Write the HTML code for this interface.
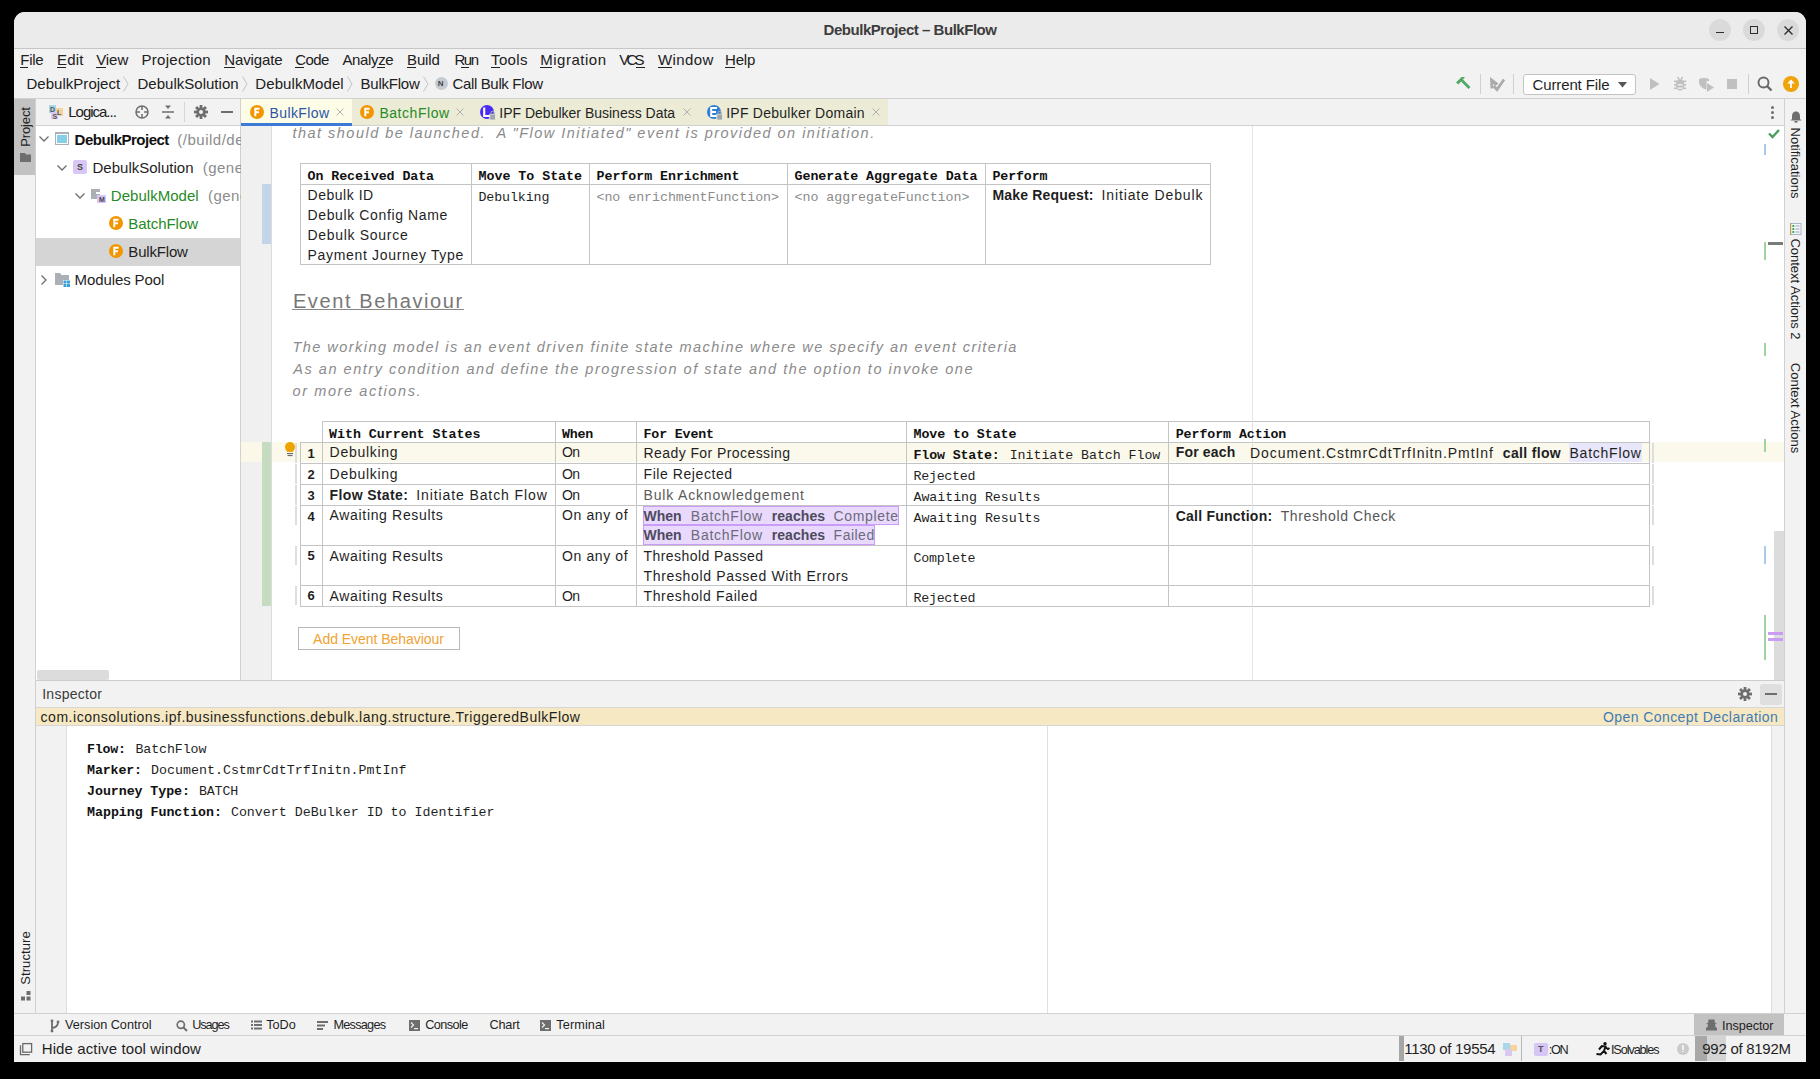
<!DOCTYPE html>
<html><head><meta charset="utf-8">
<style>
*{margin:0;padding:0;box-sizing:border-box}
html,body{width:1820px;height:1079px;overflow:hidden;background:#000}
body{position:relative;font-family:"Liberation Sans",sans-serif;color:#1f1f1f}
.a{position:absolute}
.t{position:absolute;white-space:pre}
svg{position:absolute;overflow:visible}
</style></head><body>
<div class="a" style="left:14px;top:12px;width:1792px;height:1050px;background:#f2f2f2;border-radius:11px 11px 0 0"></div>
<div class="a" style="left:14px;top:12px;width:1792px;height:36px;background:#ebebeb;border-radius:11px 11px 0 0"></div>
<div class="a" style="left:14px;top:48px;width:1792px;height:1px;background:#c6c6c6;"></div>
<div class="t" style="left:823.60px;top:20.20px;font-size:15px;line-height:19px;color:#3d3d3d;font-weight:bold;letter-spacing:-0.472px;">DebulkProject – BulkFlow</div>
<div class="a" style="left:1709px;top:19px;width:22px;height:22px;background:#dadada;border-radius:50%"></div>
<div class="a" style="left:1743px;top:19px;width:22px;height:22px;background:#dadada;border-radius:50%"></div>
<div class="a" style="left:1777px;top:19px;width:22px;height:22px;background:#dadada;border-radius:50%"></div>
<div class="a" style="left:1716px;top:32px;width:8px;height:1.4px;background:#2e2e2e;"></div>
<div class="a" style="left:1750px;top:26px;width:7.7px;height:7.6px;background:transparent;border:1.4px solid #2e2e2e"></div>
<svg style="left:1783.5px;top:25.5px" width="9" height="9"><path d="M0.5 0.5 L8.5 8.5 M8.5 0.5 L0.5 8.5" stroke="#2e2e2e" stroke-width="1.4"/></svg>
<div class="t" style="left:20.20px;top:50.40px;font-size:15px;line-height:19px;color:#202020;letter-spacing:-0.217px;">File</div>
<div class="t" style="left:57.10px;top:50.40px;font-size:15px;line-height:19px;color:#202020;letter-spacing:0.183px;">Edit</div>
<div class="t" style="left:96.20px;top:50.40px;font-size:15px;line-height:19px;color:#202020;letter-spacing:-0.067px;">View</div>
<div class="t" style="left:141.50px;top:50.40px;font-size:15px;line-height:19px;color:#202020;letter-spacing:0.278px;">Projection</div>
<div class="t" style="left:224.30px;top:50.40px;font-size:15px;line-height:19px;color:#202020;letter-spacing:-0.129px;">Navigate</div>
<div class="t" style="left:295.30px;top:50.40px;font-size:15px;line-height:19px;color:#202020;letter-spacing:-0.583px;">Code</div>
<div class="t" style="left:342.40px;top:50.40px;font-size:15px;line-height:19px;color:#202020;letter-spacing:-0.342px;">Analyze</div>
<div class="t" style="left:407.00px;top:50.40px;font-size:15px;line-height:19px;color:#202020;letter-spacing:-0.113px;">Build</div>
<div class="t" style="left:454.40px;top:50.40px;font-size:15px;line-height:19px;color:#202020;letter-spacing:-1.450px;">Run</div>
<div class="t" style="left:491.10px;top:50.40px;font-size:15px;line-height:19px;color:#202020;letter-spacing:0.325px;">Tools</div>
<div class="t" style="left:540.20px;top:50.40px;font-size:15px;line-height:19px;color:#202020;letter-spacing:0.512px;">Migration</div>
<div class="t" style="left:619.30px;top:50.40px;font-size:15px;line-height:19px;color:#202020;letter-spacing:-2.775px;">VCS</div>
<div class="t" style="left:658.00px;top:50.40px;font-size:15px;line-height:19px;color:#202020;letter-spacing:0.420px;">Window</div>
<div class="t" style="left:725.00px;top:50.40px;font-size:15px;line-height:19px;color:#202020;letter-spacing:-0.150px;">Help</div>
<div class="a" style="left:20.2px;top:67px;width:7.800000000000001px;height:1px;background:#202020;"></div>
<div class="a" style="left:57.1px;top:67px;width:8.899999999999999px;height:1px;background:#202020;"></div>
<div class="a" style="left:96.2px;top:67px;width:9.799999999999997px;height:1px;background:#202020;"></div>
<div class="a" style="left:224.3px;top:67px;width:10.699999999999989px;height:1px;background:#202020;"></div>
<div class="a" style="left:295.3px;top:67px;width:8.699999999999989px;height:1px;background:#202020;"></div>
<div class="a" style="left:377px;top:67px;width:8px;height:1px;background:#202020;"></div>
<div class="a" style="left:407px;top:67px;width:9px;height:1px;background:#202020;"></div>
<div class="a" style="left:461px;top:67px;width:8px;height:1px;background:#202020;"></div>
<div class="a" style="left:491.1px;top:67px;width:8.899999999999977px;height:1px;background:#202020;"></div>
<div class="a" style="left:540.2px;top:67px;width:11.799999999999955px;height:1px;background:#202020;"></div>
<div class="a" style="left:636px;top:67px;width:9px;height:1px;background:#202020;"></div>
<div class="a" style="left:658px;top:67px;width:14px;height:1px;background:#202020;"></div>
<div class="a" style="left:725px;top:67px;width:10px;height:1px;background:#202020;"></div>
<div class="t" style="left:26.50px;top:74.40px;font-size:15px;line-height:19px;color:#202020;letter-spacing:0.025px;">DebulkProject</div>
<div class="t" style="left:137.50px;top:74.40px;font-size:15px;line-height:19px;color:#202020;letter-spacing:0.015px;">DebulkSolution</div>
<div class="t" style="left:255.30px;top:74.40px;font-size:15px;line-height:19px;color:#202020;letter-spacing:0.085px;">DebulkModel</div>
<div class="t" style="left:360.60px;top:74.40px;font-size:15px;line-height:19px;color:#202020;letter-spacing:-0.243px;">BulkFlow</div>
<div class="t" style="left:452.40px;top:74.40px;font-size:15px;line-height:19px;color:#202020;letter-spacing:-0.338px;">Call Bulk Flow</div>
<svg style="left:123px;top:76px" width="6" height="16"><path d="M0.5 0.5 L5 8 L0.5 15.5" fill="none" stroke="#c4c4c4" stroke-width="1"/></svg>
<svg style="left:242px;top:76px" width="6" height="16"><path d="M0.5 0.5 L5 8 L0.5 15.5" fill="none" stroke="#c4c4c4" stroke-width="1"/></svg>
<svg style="left:347px;top:76px" width="6" height="16"><path d="M0.5 0.5 L5 8 L0.5 15.5" fill="none" stroke="#c4c4c4" stroke-width="1"/></svg>
<svg style="left:423px;top:76px" width="6" height="16"><path d="M0.5 0.5 L5 8 L0.5 15.5" fill="none" stroke="#c4c4c4" stroke-width="1"/></svg>
<div class="a" style="left:434.5px;top:77px;width:13px;height:13px;background:#c6cbd1;border-radius:50%"></div>
<div class="t" style="left:437.80px;top:79.43px;font-size:8px;line-height:10px;color:#444;font-weight:bold;">N</div>
<svg style="left:1450px;top:70px" width="70" height="28"><path d="M6 82.5 L11.5 77 L15 77 L13 79.5 L20.5 87 L18.5 89 L11 81.5 L8.5 84.5 Z" transform="translate(0,-70)" fill="#52a865"/><path d="M40 77 L48.5 83.5 L45.5 86 L43 84 L43 88.5 L40.5 88.5 Z" transform="translate(0,-70)" fill="#ababab"/><path d="M43.5 86 L47 89.5 L54 79.5" transform="translate(0,-70)" fill="none" stroke="#ababab" stroke-width="2.8"/></svg>
<div class="a" style="left:1480px;top:74px;width:1px;height:20px;background:#d0d0d0;"></div>
<div class="a" style="left:1513px;top:74px;width:1px;height:20px;background:#d0d0d0;"></div>
<div class="a" style="left:1523px;top:73.5px;width:112.5px;height:21px;background:#ffffff;border:1px solid #c4c4c4;border-radius:3px"></div>
<div class="t" style="left:1532.50px;top:74.60px;font-size:15px;line-height:19px;color:#1f1f1f;letter-spacing:-0.123px;">Current File</div>
<svg style="left:1617.5px;top:81.5px" width="9" height="6"><path d="M0 0 L9 0 L4.5 5.5 Z" fill="#555"/></svg>
<svg style="left:1640px;top:70px" width="105" height="28"><g fill="#c0c0c0" transform="translate(-1640,-70)"><path d="M1650 78 L1659.5 84 L1650 90 Z"/><ellipse cx="1680.1" cy="85" rx="4.3" ry="5.6"/><rect x="1674" y="80.5" width="12.2" height="1.6"/><rect x="1674" y="84" width="12.2" height="1.6"/><rect x="1674" y="87.5" width="12.2" height="1.6"/><path d="M1677.5 77 L1679.5 80 M1682.7 77 L1680.7 80" stroke="#c0c0c0" stroke-width="1.4"/><path d="M1699 79 C1702 77.5 1706 77.5 1709 79 L1709 81 L1706.5 81 L1706.5 89.5 C1703 89 1699 86 1699 82 Z"/><path d="M1707 83 L1714 87.5 L1707 92 Z"/><rect x="1727" y="79" width="10" height="10"/></g><g fill="#f2f2f2"><rect x="37.5" y="14.2" width="5.2" height="1.3"/><rect x="37.5" y="17.5" width="5.2" height="1.3"/></g></svg>
<div class="a" style="left:1748px;top:74px;width:1px;height:20px;background:#d0d0d0;"></div>
<svg style="left:1757px;top:76px" width="16" height="16"><circle cx="6.5" cy="6.5" r="5" fill="none" stroke="#686868" stroke-width="1.9"/><path d="M10 10 L14.5 14.5" stroke="#686868" stroke-width="2.4"/></svg>
<div class="a" style="left:1782.5px;top:76px;width:16px;height:16px;background:#f0a30a;border-radius:50%"></div>
<svg style="left:1785.5px;top:79px" width="10" height="10"><path d="M1.2 4.5 L5 0.5 L8.8 4.5 Z" fill="#fff"/><rect x="4.1" y="4" width="1.8" height="5" fill="#fff"/></svg>
<div class="a" style="left:14px;top:98px;width:1792px;height:1px;background:#d1d1d1;"></div>
<div class="a" style="left:14px;top:99px;width:21px;height:76px;background:#c2c2c2;"></div>
<div class="a" style="left:35px;top:98px;width:1px;height:915px;background:#d1d1d1;"></div>
<div class="t" style="left:24.5px;top:126.5px;font-size:13px;line-height:13px;color:#1f1f1f;transform:translate(-50%,-50%) rotate(-90deg);letter-spacing:-0.15px">Project</div>
<svg style="left:20px;top:153px" width="11" height="9"><path d="M0 0 L5 0 L6 1.5 L11 1.5 L11 9 L0 9 Z" fill="#6e6e6e"/></svg>
<div class="t" style="left:25px;top:958px;font-size:13px;line-height:13px;color:#1f1f1f;transform:translate(-50%,-50%) rotate(-90deg);letter-spacing:0.1px">Structure</div>
<svg style="left:21px;top:991px" width="10" height="10"><rect x="5.5" y="0" width="4" height="4" fill="#6e6e6e"/><rect x="0" y="5.5" width="4" height="4" fill="#6e6e6e"/><rect x="5.5" y="5.5" width="4" height="4" fill="#6e6e6e"/></svg>
<div class="a" style="left:36px;top:125px;width:204px;height:555px;background:#ffffff;"></div>
<div class="a" style="left:36px;top:125px;width:204px;height:1px;background:#d1d1d1;"></div>
<div class="a" style="left:240px;top:98px;width:1px;height:582px;background:#d1d1d1;"></div>
<div class="a" style="left:49px;top:105px;width:7px;height:8px;background:#a9d7ea;"></div>
<div class="a" style="left:56px;top:108px;width:7px;height:8px;background:#f6d39c;"></div>
<div class="a" style="left:51px;top:112px;width:7px;height:7px;background:#d9c8f2;"></div>
<div class="t" style="left:50.00px;top:105.07px;font-size:7px;line-height:9px;color:#555;font-weight:bold;">D</div>
<div class="t" style="left:57.00px;top:108.07px;font-size:7px;line-height:9px;color:#555;font-weight:bold;">L</div>
<div class="t" style="left:52.50px;top:111.57px;font-size:7px;line-height:9px;color:#555;font-weight:bold;">S</div>
<div class="t" style="left:68.30px;top:102.10px;font-size:15px;line-height:19px;color:#202020;letter-spacing:-1.025px;">Logica...</div>
<svg style="left:135px;top:105px" width="14" height="14"><circle cx="7" cy="7" r="6" fill="none" stroke="#6e6e6e" stroke-width="1.5"/><path d="M7 1 L7 5 M7 9 L7 13 M1 7 L5 7 M9 7 L13 7" stroke="#6e6e6e" stroke-width="1.5"/></svg>
<svg style="left:162px;top:105px" width="12" height="14"><path d="M0 7 L12 7" stroke="#6e6e6e" stroke-width="1.5"/><path d="M3 0.5 L9 0.5 L6 4 Z M3 13.5 L9 13.5 L6 10 Z" fill="#6e6e6e"/></svg>
<div class="a" style="left:184px;top:102px;width:1px;height:20px;background:#d6d6d6;"></div>
<svg style="left:194px;top:105px" width="14" height="14"><g fill="#6e6e6e"><circle cx="7" cy="7" r="4.6"/><rect x="5.6" y="0" width="2.8" height="14"/><rect x="0" y="5.6" width="14" height="2.8"/><rect x="5.6" y="0" width="2.8" height="14" transform="rotate(45 7 7)"/><rect x="5.6" y="0" width="2.8" height="14" transform="rotate(-45 7 7)"/></g><circle cx="7" cy="7" r="2" fill="#f2f2f2"/></svg>
<div class="a" style="left:221px;top:111px;width:12px;height:2px;background:#6e6e6e;"></div>
<svg style="left:38.9px;top:136.3px" width="10" height="6"><path d="M0.5 0.5 L5 5 L9.5 0.5" fill="none" stroke="#6e6e6e" stroke-width="1.3"/></svg>
<div class="a" style="left:55px;top:132px;width:14px;height:12.7px;background:#ffffff;border:1.5px solid #aab0b6;border-top-width:2.5px"></div>
<div class="a" style="left:57px;top:135px;width:10px;height:8px;background:#87cee9;"></div>
<div class="t" style="left:74.60px;top:129.80px;font-size:15px;line-height:19px;color:#111;font-weight:bold;letter-spacing:-0.512px;">DebulkProject</div>
<div class="t" style="left:177.30px;top:129.80px;font-size:15px;line-height:19px;color:#8c8c8c;letter-spacing:0.500px;">(/build/de</div>
<svg style="left:56.8px;top:165px" width="10" height="6"><path d="M0.5 0.5 L5 5 L9.5 0.5" fill="none" stroke="#6e6e6e" stroke-width="1.3"/></svg>
<div class="a" style="left:73px;top:160px;width:14px;height:13.5px;background:#d8c6f6;border-radius:2px"></div>
<div class="t" style="left:77.00px;top:161.88px;font-size:9px;line-height:11px;color:#444;font-weight:bold;">S</div>
<div class="t" style="left:92.50px;top:158.00px;font-size:15px;line-height:19px;color:#1f1f1f;letter-spacing:0.008px;">DebulkSolution</div>
<div class="t" style="left:202.70px;top:158.00px;font-size:15px;line-height:19px;color:#8c8c8c;letter-spacing:0.500px;">(gene</div>
<svg style="left:75.2px;top:193px" width="10" height="6"><path d="M0.5 0.5 L5 5 L9.5 0.5" fill="none" stroke="#6e6e6e" stroke-width="1.3"/></svg>
<div class="a" style="left:91px;top:189.2px;width:9px;height:10px;background:#aab0b6;"></div>
<div class="a" style="left:96px;top:191.5px;width:4px;height:2px;background:#ffffff;"></div>
<div class="a" style="left:97px;top:195px;width:9px;height:8px;background:#d8c6f6;"></div>
<div class="t" style="left:99.00px;top:195.07px;font-size:7px;line-height:9px;color:#444;font-weight:bold;">M</div>
<div class="t" style="left:110.80px;top:186.10px;font-size:15px;line-height:19px;color:#268a26;letter-spacing:0.035px;">DebulkModel</div>
<div class="t" style="left:207.90px;top:186.10px;font-size:15px;line-height:19px;color:#8c8c8c;letter-spacing:0.500px;">(gene</div>
<svg style="left:109px;top:216.1px" width="14" height="14"><circle cx="7" cy="7" r="7" fill="#f29600"/><path d="M5.3 11.2 L5.3 3.8 L9.6 3.8 M5.3 7.3 L9 7.3" fill="none" stroke="#fff" stroke-width="2"/></svg>
<div class="t" style="left:128.30px;top:213.80px;font-size:15px;line-height:19px;color:#268a26;letter-spacing:-0.038px;">BatchFlow</div>
<div class="a" style="left:36px;top:238px;width:204px;height:28px;background:#d5d5d5;"></div>
<svg style="left:109px;top:244px" width="14" height="14"><circle cx="7" cy="7" r="7" fill="#f29600"/><path d="M5.3 11.2 L5.3 3.8 L9.6 3.8 M5.3 7.3 L9 7.3" fill="none" stroke="#fff" stroke-width="2"/></svg>
<div class="t" style="left:128.30px;top:241.70px;font-size:15px;line-height:19px;color:#1f1f1f;letter-spacing:-0.171px;">BulkFlow</div>
<svg style="left:40.5px;top:275px" width="6" height="10"><path d="M0.5 0.5 L5 5 L0.5 9.5" fill="none" stroke="#6e6e6e" stroke-width="1.3"/></svg>
<svg style="left:55px;top:273px" width="16" height="15"><path d="M0 0 L5 0 L6.5 2 L14 2 L14 7 L8 7 L8 12 L0 12 Z" fill="#aab0b6"/><g fill="#3aa0d8"><rect x="8.5" y="7.5" width="3" height="3"/><rect x="12" y="7.5" width="3" height="3"/><rect x="8.5" y="11" width="3" height="3"/><rect x="12" y="11" width="3" height="3"/></g></svg>
<div class="t" style="left:74.60px;top:270.10px;font-size:15px;line-height:19px;color:#1f1f1f;letter-spacing:-0.109px;">Modules Pool</div>
<div class="a" style="left:37px;top:670px;width:72px;height:10px;background:#dcdcdc;border-radius:2px"></div>
<div class="a" style="left:241px;top:99px;width:1543px;height:26px;background:#f2f2f2;"></div>
<div class="a" style="left:241px;top:99px;width:647px;height:26px;background:#ececd6;"></div>
<div class="a" style="left:241px;top:99px;width:111px;height:26px;background:#fdfde7;"></div>
<div class="a" style="left:241px;top:125px;width:1543px;height:1px;background:#d1d1d1;"></div>
<div class="a" style="left:241px;top:123px;width:111px;height:3px;background:#3d7ad6;"></div>
<div class="a" style="left:272px;top:126px;width:1512px;height:554px;background:#ffffff;"></div>
<div class="a" style="left:241px;top:126px;width:31px;height:554px;background:#f0f0f0;"></div>
<div class="a" style="left:271px;top:126px;width:1px;height:554px;background:#dcdcdc;"></div>
<svg style="left:249.7px;top:105px" width="14" height="14"><circle cx="7" cy="7" r="7" fill="#f29600"/><path d="M5.3 11.2 L5.3 3.8 L9.6 3.8 M5.3 7.3 L9 7.3" fill="none" stroke="#fff" stroke-width="2"/></svg>
<div class="t" style="left:269.50px;top:103.65px;font-size:14px;line-height:18px;color:#2d55a8;letter-spacing:0.393px;">BulkFlow</div>
<svg style="left:359.9px;top:105px" width="14" height="14"><circle cx="7" cy="7" r="7" fill="#f29600"/><path d="M5.3 11.2 L5.3 3.8 L9.6 3.8 M5.3 7.3 L9 7.3" fill="none" stroke="#fff" stroke-width="2"/></svg>
<div class="t" style="left:379.40px;top:103.65px;font-size:14px;line-height:18px;color:#268a26;letter-spacing:0.550px;">BatchFlow</div>
<svg style="left:336px;top:108px" width="8" height="8"><path d="M0.5 0.5 L7.5 7.5 M7.5 0.5 L0.5 7.5" stroke="#b0b0b0" stroke-width="1"/></svg>
<svg style="left:455.5px;top:108px" width="8" height="8"><path d="M0.5 0.5 L7.5 7.5 M7.5 0.5 L0.5 7.5" stroke="#b0b0b0" stroke-width="1"/></svg>
<svg style="left:683px;top:108px" width="8" height="8"><path d="M0.5 0.5 L7.5 7.5 M7.5 0.5 L0.5 7.5" stroke="#b0b0b0" stroke-width="1"/></svg>
<svg style="left:872px;top:108px" width="8" height="8"><path d="M0.5 0.5 L7.5 7.5 M7.5 0.5 L0.5 7.5" stroke="#b0b0b0" stroke-width="1"/></svg>
<svg style="left:479px;top:104px" width="18" height="18"><circle cx="8" cy="8" r="7" fill="#4a2cf5"/><path d="M5.2 3.5 L5.2 12 L11 12" fill="none" stroke="#fff" stroke-width="2.1"/><rect x="10.8" y="10.2" width="5.6" height="5.8" fill="#9ea7b0" stroke="#ececd6" stroke-width="0.8"/><path d="M12 10.5 L12 8.8 A1.6 1.6 0 0 1 15.2 8.8 L15.2 10.5" fill="none" stroke="#9ea7b0" stroke-width="1.1"/></svg>
<div class="t" style="left:499.30px;top:103.65px;font-size:14px;line-height:18px;color:#1f1f1f;">IPF Debulker Business Data</div>
<svg style="left:705.5px;top:104px" width="18" height="18"><circle cx="8" cy="8" r="7" fill="#2f7fd6"/><path d="M11 4 L5.2 4 L5.2 12 L11 12 M5.2 8 L10 8" fill="none" stroke="#fff" stroke-width="2"/><rect x="10.8" y="10.2" width="5.6" height="5.8" fill="#9ea7b0" stroke="#ececd6" stroke-width="0.8"/><path d="M12 10.5 L12 8.8 A1.6 1.6 0 0 1 15.2 8.8 L15.2 10.5" fill="none" stroke="#9ea7b0" stroke-width="1.1"/></svg>
<div class="t" style="left:726.20px;top:103.65px;font-size:14px;line-height:18px;color:#1f1f1f;letter-spacing:0.253px;">IPF Debulker Domain</div>
<div class="a" style="left:1770.5px;top:106px;width:3px;height:3px;background:#6e6e6e;border-radius:50%"></div>
<div class="a" style="left:1770.5px;top:111px;width:3px;height:3px;background:#6e6e6e;border-radius:50%"></div>
<div class="a" style="left:1770.5px;top:116px;width:3px;height:3px;background:#6e6e6e;border-radius:50%"></div>
<div class="a" style="left:272px;top:126px;width:1000px;height:20px;overflow:hidden">
<div class="t" style="left:20.50px;top:-2.33px;font-size:14.5px;line-height:18px;color:#8b8b8b;font-style:italic;letter-spacing:1.476px;">that should be launched.  A &quot;Flow Initiated&quot; event is provided on initiation.</div>
</div>
<div class="a" style="left:262px;top:184px;width:9px;height:60px;background:#c3d5e8;"></div>
<div class="a" style="left:1252px;top:126px;width:1px;height:554px;background:#e6e6e6;"></div>
<div class="a" style="left:300px;top:163px;width:911px;height:1px;background:#c4c4c4;"></div>
<div class="a" style="left:300px;top:264px;width:911px;height:1px;background:#c4c4c4;"></div>
<div class="a" style="left:300px;top:163px;width:1px;height:102px;background:#c4c4c4;"></div>
<div class="a" style="left:1210px;top:163px;width:1px;height:102px;background:#c4c4c4;"></div>
<div class="a" style="left:300px;top:184px;width:911px;height:1px;background:#c4c4c4;"></div>
<div class="a" style="left:471px;top:163px;width:1px;height:102px;background:#c4c4c4;"></div>
<div class="a" style="left:589px;top:163px;width:1px;height:102px;background:#c4c4c4;"></div>
<div class="a" style="left:787px;top:163px;width:1px;height:102px;background:#c4c4c4;"></div>
<div class="a" style="left:985px;top:163px;width:1px;height:102px;background:#c4c4c4;"></div>
<div class="t" style="left:307.50px;top:167.76px;font-size:13.3px;line-height:17px;color:#111;font-family:'Liberation Mono',monospace;font-weight:bold;letter-spacing:-0.073px;">On Received Data</div>
<div class="t" style="left:478.50px;top:167.76px;font-size:13.3px;line-height:17px;color:#111;font-family:'Liberation Mono',monospace;font-weight:bold;letter-spacing:-0.021px;">Move To State</div>
<div class="t" style="left:596.50px;top:167.76px;font-size:13.3px;line-height:17px;color:#111;font-family:'Liberation Mono',monospace;font-weight:bold;letter-spacing:-0.038px;">Perform Enrichment</div>
<div class="t" style="left:794.50px;top:167.76px;font-size:13.3px;line-height:17px;color:#111;font-family:'Liberation Mono',monospace;font-weight:bold;letter-spacing:-0.025px;">Generate Aggregate Data</div>
<div class="t" style="left:992.50px;top:167.76px;font-size:13.3px;line-height:17px;color:#111;font-family:'Liberation Mono',monospace;font-weight:bold;letter-spacing:-0.142px;">Perform</div>
<div class="t" style="left:307.50px;top:186.15px;font-size:14px;line-height:18px;color:#1f1f1f;letter-spacing:0.531px;">Debulk ID</div>
<div class="t" style="left:307.50px;top:206.05px;font-size:14px;line-height:18px;color:#1f1f1f;letter-spacing:0.626px;">Debulk Config Name</div>
<div class="t" style="left:307.50px;top:225.75px;font-size:14px;line-height:18px;color:#1f1f1f;letter-spacing:0.696px;">Debulk Source</div>
<div class="t" style="left:307.50px;top:245.65px;font-size:14px;line-height:18px;color:#1f1f1f;letter-spacing:0.676px;">Payment Journey Type</div>
<div class="t" style="left:478.50px;top:188.96px;font-size:13.3px;line-height:17px;color:#1f1f1f;font-family:'Liberation Mono',monospace;letter-spacing:-0.106px;">Debulking</div>
<div class="t" style="left:596.50px;top:188.96px;font-size:13.3px;line-height:17px;color:#8c8c8c;font-family:'Liberation Mono',monospace;letter-spacing:-0.048px;">&lt;no enrichmentFunction&gt;</div>
<div class="t" style="left:794.50px;top:188.96px;font-size:13.3px;line-height:17px;color:#8c8c8c;font-family:'Liberation Mono',monospace;letter-spacing:-0.029px;">&lt;no aggregateFunction&gt;</div>
<div class="t" style="left:992.50px;top:186.15px;font-size:14px;line-height:18px;color:#1f1f1f;font-weight:bold;letter-spacing:0.183px;">Make Request:</div>
<div class="t" style="left:1101.50px;top:186.15px;font-size:14px;line-height:18px;color:#1f1f1f;letter-spacing:0.875px;">Initiate Debulk</div>
<div class="t" style="left:292.90px;top:288.67px;font-size:20px;line-height:25px;color:#777777;letter-spacing:1.611px;">Event Behaviour</div>
<div class="a" style="left:292px;top:309px;width:172px;height:1.2px;background:#888888;"></div>
<div class="t" style="left:292.50px;top:337.87px;font-size:14.5px;line-height:18px;color:#8b8b8b;font-style:italic;letter-spacing:1.454px;">The working model is an event driven finite state machine where we specify an event criteria</div>
<div class="t" style="left:293.25px;top:359.87px;font-size:14.5px;line-height:18px;color:#8b8b8b;font-style:italic;letter-spacing:1.533px;">As an entry condition and define the progression of state and the option to invoke one</div>
<div class="t" style="left:292.50px;top:381.77px;font-size:14.5px;line-height:18px;color:#8b8b8b;font-style:italic;letter-spacing:1.610px;">or more actions.</div>
<div class="a" style="left:241px;top:442px;width:21px;height:20px;background:#fbf8e9;"></div>
<div class="a" style="left:272px;top:442px;width:1512px;height:20px;background:#fbf9ec;"></div>
<div class="a" style="left:262px;top:442px;width:9px;height:164px;background:#c5dcc0;"></div>
<div class="a" style="left:322px;top:421px;width:1328px;height:1px;background:#c4c4c4;"></div>
<div class="a" style="left:322px;top:421px;width:1px;height:22px;background:#c4c4c4;"></div>
<div class="a" style="left:1649px;top:421px;width:1px;height:22px;background:#c4c4c4;"></div>
<div class="a" style="left:555px;top:421px;width:1px;height:185px;background:#c4c4c4;"></div>
<div class="a" style="left:636px;top:421px;width:1px;height:185px;background:#c4c4c4;"></div>
<div class="a" style="left:906px;top:421px;width:1px;height:185px;background:#c4c4c4;"></div>
<div class="a" style="left:1168px;top:421px;width:1px;height:185px;background:#c4c4c4;"></div>
<div class="a" style="left:300px;top:442px;width:1350px;height:1px;background:#c4c4c4;"></div>
<div class="a" style="left:300px;top:463px;width:1350px;height:1px;background:#c4c4c4;"></div>
<div class="a" style="left:300px;top:484px;width:1350px;height:1px;background:#c4c4c4;"></div>
<div class="a" style="left:300px;top:505px;width:1350px;height:1px;background:#c4c4c4;"></div>
<div class="a" style="left:300px;top:545px;width:1350px;height:1px;background:#c4c4c4;"></div>
<div class="a" style="left:300px;top:585px;width:1350px;height:1px;background:#c4c4c4;"></div>
<div class="a" style="left:300px;top:606px;width:1350px;height:1px;background:#c4c4c4;"></div>
<div class="a" style="left:300px;top:442px;width:1px;height:165px;background:#c4c4c4;"></div>
<div class="a" style="left:322px;top:442px;width:1px;height:165px;background:#c4c4c4;"></div>
<div class="a" style="left:1649px;top:442px;width:1px;height:165px;background:#c4c4c4;"></div>
<div class="a" style="left:295px;top:443px;width:2px;height:20px;background:#dedede;"></div>
<div class="a" style="left:1652px;top:443px;width:2px;height:20px;background:#dedede;"></div>
<div class="a" style="left:295px;top:464px;width:2px;height:20px;background:#dedede;"></div>
<div class="a" style="left:1652px;top:464px;width:2px;height:20px;background:#dedede;"></div>
<div class="a" style="left:295px;top:485px;width:2px;height:20px;background:#dedede;"></div>
<div class="a" style="left:1652px;top:485px;width:2px;height:20px;background:#dedede;"></div>
<div class="a" style="left:295px;top:506px;width:2px;height:19px;background:#dedede;"></div>
<div class="a" style="left:1652px;top:506px;width:2px;height:19px;background:#dedede;"></div>
<div class="a" style="left:295px;top:546px;width:2px;height:19px;background:#dedede;"></div>
<div class="a" style="left:1652px;top:546px;width:2px;height:19px;background:#dedede;"></div>
<div class="a" style="left:295px;top:586px;width:2px;height:19px;background:#dedede;"></div>
<div class="a" style="left:1652px;top:586px;width:2px;height:19px;background:#dedede;"></div>
<div class="a" style="left:1252px;top:421px;width:1px;height:186px;background:#e0e0e0;"></div>
<div class="t" style="left:329.00px;top:425.66px;font-size:13.3px;line-height:17px;color:#111;font-family:'Liberation Mono',monospace;font-weight:bold;letter-spacing:-0.014px;">With Current States</div>
<div class="t" style="left:562.00px;top:425.66px;font-size:13.3px;line-height:17px;color:#111;font-family:'Liberation Mono',monospace;font-weight:bold;letter-spacing:-0.250px;">When</div>
<div class="t" style="left:643.50px;top:425.66px;font-size:13.3px;line-height:17px;color:#111;font-family:'Liberation Mono',monospace;font-weight:bold;letter-spacing:-0.156px;">For Event</div>
<div class="t" style="left:913.50px;top:425.66px;font-size:13.3px;line-height:17px;color:#111;font-family:'Liberation Mono',monospace;font-weight:bold;letter-spacing:-0.062px;">Move to State</div>
<div class="t" style="left:1175.70px;top:425.66px;font-size:13.3px;line-height:17px;color:#111;font-family:'Liberation Mono',monospace;font-weight:bold;letter-spacing:-0.081px;">Perform Action</div>
<div class="t" style="left:307.60px;top:446.19px;font-size:13px;line-height:16px;color:#1f1f1f;font-weight:bold;">1</div>
<div class="t" style="left:307.60px;top:467.09px;font-size:13px;line-height:16px;color:#1f1f1f;font-weight:bold;">2</div>
<div class="t" style="left:307.60px;top:488.09px;font-size:13px;line-height:16px;color:#1f1f1f;font-weight:bold;">3</div>
<div class="t" style="left:307.60px;top:508.79px;font-size:13px;line-height:16px;color:#1f1f1f;font-weight:bold;">4</div>
<div class="t" style="left:307.60px;top:548.09px;font-size:13px;line-height:16px;color:#1f1f1f;font-weight:bold;">5</div>
<div class="t" style="left:307.60px;top:588.09px;font-size:13px;line-height:16px;color:#1f1f1f;font-weight:bold;">6</div>
<div class="t" style="left:329.60px;top:443.35px;font-size:14px;line-height:18px;color:#1f1f1f;letter-spacing:0.719px;">Debulking</div>
<div class="t" style="left:329.60px;top:464.75px;font-size:14px;line-height:18px;color:#1f1f1f;letter-spacing:0.719px;">Debulking</div>
<div class="t" style="left:329.60px;top:485.85px;font-size:14px;line-height:18px;color:#1f1f1f;font-weight:bold;letter-spacing:0.355px;">Flow State:</div>
<div class="t" style="left:416.30px;top:485.85px;font-size:14px;line-height:18px;color:#1f1f1f;letter-spacing:0.892px;">Initiate Batch Flow</div>
<div class="t" style="left:329.60px;top:506.45px;font-size:14px;line-height:18px;color:#1f1f1f;letter-spacing:0.663px;">Awaiting Results</div>
<div class="t" style="left:329.60px;top:546.75px;font-size:14px;line-height:18px;color:#1f1f1f;letter-spacing:0.663px;">Awaiting Results</div>
<div class="t" style="left:329.60px;top:586.75px;font-size:14px;line-height:18px;color:#1f1f1f;letter-spacing:0.663px;">Awaiting Results</div>
<div class="t" style="left:562.00px;top:443.35px;font-size:14px;line-height:18px;color:#1f1f1f;letter-spacing:-0.700px;">On</div>
<div class="t" style="left:562.00px;top:464.75px;font-size:14px;line-height:18px;color:#1f1f1f;letter-spacing:-0.700px;">On</div>
<div class="t" style="left:562.00px;top:485.85px;font-size:14px;line-height:18px;color:#1f1f1f;letter-spacing:-0.700px;">On</div>
<div class="t" style="left:562.00px;top:506.45px;font-size:14px;line-height:18px;color:#1f1f1f;letter-spacing:0.619px;">On any of</div>
<div class="t" style="left:562.00px;top:546.75px;font-size:14px;line-height:18px;color:#1f1f1f;letter-spacing:0.619px;">On any of</div>
<div class="t" style="left:562.00px;top:586.75px;font-size:14px;line-height:18px;color:#1f1f1f;letter-spacing:-0.700px;">On</div>
<div class="t" style="left:643.50px;top:443.75px;font-size:14px;line-height:18px;color:#1f1f1f;letter-spacing:0.421px;">Ready For Processing</div>
<div class="t" style="left:643.50px;top:464.95px;font-size:14px;line-height:18px;color:#1f1f1f;letter-spacing:0.575px;">File Rejected</div>
<div class="t" style="left:643.50px;top:485.95px;font-size:14px;line-height:18px;color:#5a5a5a;letter-spacing:0.829px;">Bulk Acknowledgement</div>
<div class="a" style="left:643px;top:506px;width:256px;height:19px;background:#e9d9fc;border:1px solid #c99df6"></div>
<div class="a" style="left:643px;top:525px;width:232px;height:20px;background:#e9d9fc;border:1px solid #c99df6"></div>
<div class="t" style="left:643.50px;top:506.65px;font-size:14px;line-height:18px;color:#4d4a5e;font-weight:bold;letter-spacing:-0.033px;">When</div>
<div class="t" style="left:690.80px;top:506.65px;font-size:14px;line-height:18px;color:#6b6b7a;letter-spacing:0.750px;">BatchFlow</div>
<div class="t" style="left:771.70px;top:506.65px;font-size:14px;line-height:18px;color:#4d4a5e;font-weight:bold;letter-spacing:0.075px;">reaches</div>
<div class="t" style="left:643.50px;top:526.45px;font-size:14px;line-height:18px;color:#4d4a5e;font-weight:bold;letter-spacing:-0.033px;">When</div>
<div class="t" style="left:690.80px;top:526.45px;font-size:14px;line-height:18px;color:#6b6b7a;letter-spacing:0.750px;">BatchFlow</div>
<div class="t" style="left:771.70px;top:526.45px;font-size:14px;line-height:18px;color:#4d4a5e;font-weight:bold;letter-spacing:0.075px;">reaches</div>
<div class="t" style="left:833.60px;top:506.65px;font-size:14px;line-height:18px;color:#6b6b7a;letter-spacing:0.643px;">Complete</div>
<div class="t" style="left:833.60px;top:526.45px;font-size:14px;line-height:18px;color:#6b6b7a;letter-spacing:0.490px;">Failed</div>
<div class="t" style="left:643.50px;top:547.15px;font-size:14px;line-height:18px;color:#1f1f1f;letter-spacing:0.443px;">Threshold Passed</div>
<div class="t" style="left:643.50px;top:566.95px;font-size:14px;line-height:18px;color:#1f1f1f;letter-spacing:0.657px;">Threshold Passed With Errors</div>
<div class="t" style="left:643.50px;top:586.65px;font-size:14px;line-height:18px;color:#1f1f1f;letter-spacing:0.637px;">Threshold Failed</div>
<div class="t" style="left:913.50px;top:446.96px;font-size:13.3px;line-height:17px;color:#111;font-family:'Liberation Mono',monospace;font-weight:bold;letter-spacing:-0.150px;">Flow State:</div>
<div class="t" style="left:1009.70px;top:446.96px;font-size:13.3px;line-height:17px;color:#1f1f1f;font-family:'Liberation Mono',monospace;letter-spacing:-0.053px;">Initiate Batch Flow</div>
<div class="t" style="left:913.50px;top:467.96px;font-size:13.3px;line-height:17px;color:#1f1f1f;font-family:'Liberation Mono',monospace;letter-spacing:-0.264px;">Rejected</div>
<div class="t" style="left:913.50px;top:489.06px;font-size:13.3px;line-height:17px;color:#1f1f1f;font-family:'Liberation Mono',monospace;letter-spacing:-0.047px;">Awaiting Results</div>
<div class="t" style="left:913.50px;top:509.96px;font-size:13.3px;line-height:17px;color:#1f1f1f;font-family:'Liberation Mono',monospace;letter-spacing:-0.047px;">Awaiting Results</div>
<div class="t" style="left:913.50px;top:549.86px;font-size:13.3px;line-height:17px;color:#1f1f1f;font-family:'Liberation Mono',monospace;letter-spacing:-0.264px;">Complete</div>
<div class="t" style="left:913.50px;top:589.76px;font-size:13.3px;line-height:17px;color:#1f1f1f;font-family:'Liberation Mono',monospace;letter-spacing:-0.264px;">Rejected</div>
<div class="t" style="left:1175.70px;top:443.45px;font-size:14px;line-height:18px;color:#1f1f1f;font-weight:bold;letter-spacing:0.179px;">For each</div>
<div class="t" style="left:1250.00px;top:443.85px;font-size:14px;line-height:18px;color:#1f1f1f;letter-spacing:0.927px;">Document.CstmrCdtTrfInitn.PmtInf</div>
<div class="t" style="left:1502.80px;top:443.85px;font-size:14px;line-height:18px;color:#1f1f1f;font-weight:bold;letter-spacing:0.338px;">call flow</div>
<div class="a" style="left:1569px;top:443px;width:73px;height:19px;background:#e8e6fa;"></div>
<div class="t" style="left:1569.50px;top:443.85px;font-size:14px;line-height:18px;color:#1f1f1f;letter-spacing:0.762px;">BatchFlow</div>
<div class="t" style="left:1175.70px;top:506.75px;font-size:14px;line-height:18px;color:#1f1f1f;font-weight:bold;letter-spacing:0.238px;">Call Function:</div>
<div class="t" style="left:1280.70px;top:506.75px;font-size:14px;line-height:18px;color:#555555;letter-spacing:0.629px;">Threshold Check</div>
<svg style="left:284px;top:441px" width="12" height="17"><circle cx="6" cy="6" r="5" fill="#eea400"/><path d="M2.2 8.5 L3 10.8 L9 10.8 L9.8 8.5 Z" fill="#eea400"/><rect x="3" y="12" width="6" height="1.1" fill="#666"/><rect x="3.5" y="14" width="5" height="1.1" fill="#666"/></svg>
<div class="a" style="left:298px;top:627px;width:162px;height:23px;background:#ffffff;border:1px solid #b9b9b9"></div>
<div class="t" style="left:313.10px;top:630.25px;font-size:14px;line-height:18px;color:#f0a232;letter-spacing:-0.042px;">Add Event Behaviour</div>
<svg style="left:1768px;top:129px" width="12" height="9"><path d="M1 4.5 L4.5 8 L11 1" fill="none" stroke="#4a9d5b" stroke-width="2.4"/></svg>
<div class="a" style="left:1764px;top:144px;width:2px;height:11px;background:#a9c9ef;"></div>
<div class="a" style="left:1768px;top:242px;width:15px;height:3px;background:#7a7a7a;"></div>
<div class="a" style="left:1764px;top:242px;width:2px;height:18px;background:#9fd39f;"></div>
<div class="a" style="left:1764px;top:343px;width:2px;height:13px;background:#9fd39f;"></div>
<div class="a" style="left:1764px;top:439px;width:2px;height:13px;background:#9fd39f;"></div>
<div class="a" style="left:1764px;top:546px;width:2px;height:18px;background:#a9c9ef;"></div>
<div class="a" style="left:1764px;top:615px;width:2px;height:45px;background:#9fd39f;"></div>
<div class="a" style="left:1774px;top:531px;width:10px;height:149px;background:#dcdcdc;"></div>
<div class="a" style="left:1768px;top:632px;width:15px;height:3px;background:#c99df6;"></div>
<div class="a" style="left:1768px;top:638px;width:15px;height:3px;background:#c99df6;"></div>
<div class="a" style="left:1764px;top:652px;width:2px;height:8px;background:#9fd39f;"></div>
<div class="a" style="left:1784px;top:98px;width:1px;height:915px;background:#d1d1d1;"></div>
<svg style="left:1789.5px;top:111.3px" width="12" height="12"><path d="M6 0.5 C3 0.5 2 3 2 5.5 L2 8 L0.5 9.5 L11.5 9.5 L10 8 L10 5.5 C10 3 9 0.5 6 0.5 Z" fill="#6e6e6e"/><rect x="4.5" y="10" width="3" height="1.6" fill="#6e6e6e"/></svg>
<div class="t" style="left:1795px;top:163px;font-size:13px;line-height:13px;color:#1f1f1f;transform:translate(-50%,-50%) rotate(90deg)">Notifications</div>
<svg style="left:1790px;top:222.5px" width="12" height="12"><rect x="0.5" y="0.5" width="10.5" height="11" fill="#f4f7fb" stroke="#a9b7c6" stroke-width="1"/><rect x="0" y="0" width="1.2" height="12" fill="#b5a14a"/><g fill="#2e9d3a"><circle cx="3.3" cy="3" r="1.1"/><circle cx="3.3" cy="6" r="1.1"/><circle cx="3.3" cy="9" r="1.1"/></g><g fill="#9aa5b5"><rect x="5.5" y="2.5" width="4" height="1"/><rect x="5.5" y="5.5" width="4" height="1"/><rect x="5.5" y="8.5" width="4" height="1"/></g></svg>
<div class="t" style="left:1795px;top:289px;font-size:13px;line-height:13px;color:#1f1f1f;transform:translate(-50%,-50%) rotate(90deg)">Context Actions 2</div>
<div class="t" style="left:1795px;top:407.5px;font-size:13px;line-height:13px;color:#1f1f1f;transform:translate(-50%,-50%) rotate(90deg)">Context Actions</div>
<div class="a" style="left:36px;top:680px;width:1748px;height:1px;background:#cdcdcd;"></div>
<div class="a" style="left:36px;top:681px;width:1748px;height:26px;background:#f2f2f2;"></div>
<div class="t" style="left:42.20px;top:685.25px;font-size:14px;line-height:18px;color:#3a3a3a;letter-spacing:0.263px;">Inspector</div>
<svg style="left:1738px;top:687px" width="14" height="14"><g fill="#6e6e6e"><circle cx="7" cy="7" r="4.6"/><rect x="5.6" y="0" width="2.8" height="14"/><rect x="0" y="5.6" width="14" height="2.8"/><rect x="5.6" y="0" width="2.8" height="14" transform="rotate(45 7 7)"/><rect x="5.6" y="0" width="2.8" height="14" transform="rotate(-45 7 7)"/></g><circle cx="7" cy="7" r="2" fill="#f2f2f2"/></svg>
<div class="a" style="left:1760px;top:683.5px;width:21.5px;height:21px;background:#dfdfdf;border-radius:3px"></div>
<div class="a" style="left:1765px;top:693px;width:12px;height:2px;background:#6e6e6e;"></div>
<div class="a" style="left:36px;top:707px;width:1748px;height:1px;background:#d6d6d6;"></div>
<div class="a" style="left:36px;top:708px;width:1748px;height:18px;background:#f6e8c2;"></div>
<div class="a" style="left:36px;top:725px;width:1748px;height:1px;background:#d6d6d6;"></div>
<div class="t" style="left:40.60px;top:708.35px;font-size:14px;line-height:18px;color:#1f1f1f;letter-spacing:0.517px;">com.iconsolutions.ipf.businessfunctions.debulk.lang.structure.TriggeredBulkFlow</div>
<div class="t" style="left:1602.90px;top:708.35px;font-size:14px;line-height:18px;color:#3f7cb6;letter-spacing:0.430px;">Open Concept Declaration</div>
<div class="a" style="left:36px;top:726px;width:1748px;height:287px;background:#ffffff;"></div>
<div class="a" style="left:36px;top:726px;width:30px;height:287px;background:#f2f2f2;"></div>
<div class="a" style="left:66px;top:726px;width:1px;height:287px;background:#dedede;"></div>
<div class="a" style="left:1047px;top:726px;width:1px;height:287px;background:#e0e0e0;"></div>
<div class="a" style="left:1771px;top:726px;width:13px;height:287px;background:#f2f2f2;"></div>
<div class="a" style="left:1771px;top:726px;width:1px;height:287px;background:#dedede;"></div>
<div class="t" style="left:87.10px;top:740.56px;font-size:13.3px;line-height:17px;color:#111;font-family:'Liberation Mono',monospace;font-weight:bold;letter-spacing:-0.250px;">Flow:</div>
<div class="t" style="left:135.40px;top:740.56px;font-size:13.3px;line-height:17px;color:#1f1f1f;font-family:'Liberation Mono',monospace;letter-spacing:-0.094px;">BatchFlow</div>
<div class="t" style="left:87.10px;top:761.86px;font-size:13.3px;line-height:17px;color:#111;font-family:'Liberation Mono',monospace;font-weight:bold;letter-spacing:-0.158px;">Marker:</div>
<div class="t" style="left:151.10px;top:761.86px;font-size:13.3px;line-height:17px;color:#1f1f1f;font-family:'Liberation Mono',monospace;">Document.CstmrCdtTrfInitn.PmtInf</div>
<div class="t" style="left:87.10px;top:783.06px;font-size:13.3px;line-height:17px;color:#111;font-family:'Liberation Mono',monospace;font-weight:bold;letter-spacing:-0.071px;">Journey Type:</div>
<div class="t" style="left:198.90px;top:783.06px;font-size:13.3px;line-height:17px;color:#1f1f1f;font-family:'Liberation Mono',monospace;letter-spacing:-0.150px;">BATCH</div>
<div class="t" style="left:87.10px;top:804.06px;font-size:13.3px;line-height:17px;color:#111;font-family:'Liberation Mono',monospace;font-weight:bold;letter-spacing:-0.050px;">Mapping Function:</div>
<div class="t" style="left:230.90px;top:804.06px;font-size:13.3px;line-height:17px;color:#1f1f1f;font-family:'Liberation Mono',monospace;letter-spacing:0.006px;">Convert DeBulker ID to Identifier</div>
<div class="a" style="left:14px;top:1013px;width:1792px;height:1px;background:#d1d1d1;"></div>
<div class="a" style="left:1694px;top:1014px;width:90px;height:21px;background:#c2c2c2;"></div>
<div class="a" style="left:14px;top:1035px;width:1792px;height:1px;background:#d1d1d1;"></div>
<svg style="left:49px;top:1019px" width="12" height="14"><path d="M3 2 L3 12 M3 9 C7 8.5 9 7 9 3" fill="none" stroke="#6e6e6e" stroke-width="1.8"/><circle cx="3" cy="2" r="1.4" fill="#6e6e6e"/><circle cx="3" cy="12" r="1.4" fill="#6e6e6e"/><circle cx="9" cy="3" r="1.4" fill="#6e6e6e"/></svg>
<div class="t" style="left:65.10px;top:1017.40px;font-size:12.7px;line-height:16px;color:#1f1f1f;letter-spacing:-0.025px;">Version Control</div>
<svg style="left:175.5px;top:1020px" width="12" height="12"><circle cx="4.8" cy="4.8" r="3.6" fill="none" stroke="#6e6e6e" stroke-width="1.7"/><path d="M7.5 7.5 L11 11" stroke="#6e6e6e" stroke-width="2"/></svg>
<div class="t" style="left:192.30px;top:1017.40px;font-size:12.7px;line-height:16px;color:#1f1f1f;letter-spacing:-1.090px;">Usages</div>
<svg style="left:250.7px;top:1020px" width="11" height="10"><g fill="#6e6e6e"><rect x="0" y="0.5" width="2" height="2"/><rect x="0" y="4" width="2" height="2"/><rect x="0" y="7.5" width="2" height="2"/><rect x="3" y="0.5" width="8" height="2"/><rect x="3" y="4" width="8" height="2"/><rect x="3" y="7.5" width="8" height="2"/></g></svg>
<div class="t" style="left:266.20px;top:1017.40px;font-size:12.7px;line-height:16px;color:#1f1f1f;letter-spacing:0.017px;">ToDo</div>
<svg style="left:316.7px;top:1021px" width="12" height="9"><g fill="#6e6e6e"><rect x="0" y="0" width="11" height="2"/><rect x="0" y="3.5" width="8" height="2"/><rect x="0" y="7" width="6" height="2"/></g></svg>
<div class="t" style="left:333.40px;top:1017.40px;font-size:12.7px;line-height:16px;color:#1f1f1f;letter-spacing:-0.729px;">Messages</div>
<svg style="left:409px;top:1020px" width="11" height="11"><rect x="0" y="0" width="11" height="11" fill="#6e6e6e"/><path d="M2 2.5 L4.5 5 L2 7.5" fill="none" stroke="#f2f2f2" stroke-width="1.2"/><rect x="5" y="8" width="4" height="1.2" fill="#f2f2f2"/></svg>
<div class="t" style="left:425.20px;top:1017.40px;font-size:12.7px;line-height:16px;color:#1f1f1f;letter-spacing:-0.567px;">Console</div>
<div class="t" style="left:489.40px;top:1017.40px;font-size:12.7px;line-height:16px;color:#1f1f1f;letter-spacing:-0.163px;">Chart</div>
<svg style="left:540px;top:1020px" width="11" height="11"><rect x="0" y="0" width="11" height="11" fill="#6e6e6e"/><path d="M2 2.5 L4.5 5 L2 7.5" fill="none" stroke="#f2f2f2" stroke-width="1.2"/><rect x="5" y="8" width="4" height="1.2" fill="#f2f2f2"/></svg>
<div class="t" style="left:556.30px;top:1017.40px;font-size:12.7px;line-height:16px;color:#1f1f1f;letter-spacing:0.100px;">Terminal</div>
<svg style="left:1706.4px;top:1019px" width="11" height="12"><path d="M2.5 0.5 L8.5 0.5 L9 4 L11 4.5 L9 5.5 L9.5 8 L11 9 L11 11.5 L0 11.5 L0 9 L1.5 8 L2 5.5 L0 4.5 L2 4 Z" fill="#6e6e6e"/></svg>
<div class="t" style="left:1722.10px;top:1017.50px;font-size:12.7px;line-height:16px;color:#1f1f1f;letter-spacing:-0.094px;">Inspector</div>
<svg style="left:19px;top:1042px" width="14" height="14"><rect x="3.8" y="1.6" width="8.8" height="8.6" fill="none" stroke="#6a6a6a" stroke-width="1.3"/><path d="M1.5 3.2 L1.5 12.6 L10.8 12.6" fill="none" stroke="#6a6a6a" stroke-width="1.3"/></svg>
<div class="t" style="left:41.70px;top:1039.00px;font-size:15px;line-height:19px;color:#1f1f1f;letter-spacing:0.114px;">Hide active tool window</div>
<div class="a" style="left:1399px;top:1036px;width:5px;height:25px;background:#a6a6a6;"></div>
<div class="t" style="left:1404.20px;top:1039.40px;font-size:15px;line-height:19px;color:#1f1f1f;letter-spacing:-0.283px;">1130 of 19554</div>
<div class="a" style="left:1503px;top:1042.5px;width:7px;height:7px;background:#a9d7ea;"></div>
<div class="a" style="left:1510px;top:1045px;width:7px;height:6px;background:#f6d39c;"></div>
<div class="a" style="left:1505px;top:1049px;width:7px;height:7px;background:#d9c8f2;"></div>
<div class="a" style="left:1521px;top:1036px;width:1px;height:25px;background:#b8b8b8;"></div>
<div class="a" style="left:1534px;top:1042.5px;width:13.6px;height:13.3px;background:#d6c5f7;border-radius:2px"></div>
<div class="t" style="left:1538.00px;top:1044.38px;font-size:9px;line-height:11px;color:#555;font-weight:bold;">T</div>
<div class="t" style="left:1548.80px;top:1041.60px;font-size:12.7px;line-height:16px;color:#1f1f1f;letter-spacing:-1.400px;">:ON</div>
<svg style="left:1596px;top:1042px" width="14" height="14"><circle cx="9" cy="1.8" r="1.7" fill="#111"/><path d="M5 4 L9.5 4.5 L8 9 L10.5 12 M8 9 L4.5 12.5 L0.5 12 M5.5 4.5 L3 7.5 M9 5 L12 7 L13.5 6" fill="none" stroke="#111" stroke-width="2"/></svg>
<div class="t" style="left:1610.90px;top:1041.60px;font-size:12.7px;line-height:16px;color:#1f1f1f;letter-spacing:-1.089px;">ISolvables</div>
<div class="a" style="left:1677px;top:1042.5px;width:12px;height:12px;background:#cacaca;border-radius:50%"></div>
<div class="a" style="left:1682.2px;top:1044.5px;width:1.8px;height:5px;background:#f2f2f2;"></div>
<div class="a" style="left:1682.2px;top:1050.5px;width:1.8px;height:1.8px;background:#f2f2f2;"></div>
<div class="a" style="left:1695px;top:1036px;width:12px;height:25px;background:#a8a8a8;"></div>
<div class="a" style="left:1707px;top:1036px;width:19px;height:25px;background:#d4d4d4;"></div>
<div class="t" style="left:1702.30px;top:1039.40px;font-size:15px;line-height:19px;color:#1f1f1f;letter-spacing:-0.277px;">992 of 8192M</div>
</body></html>
